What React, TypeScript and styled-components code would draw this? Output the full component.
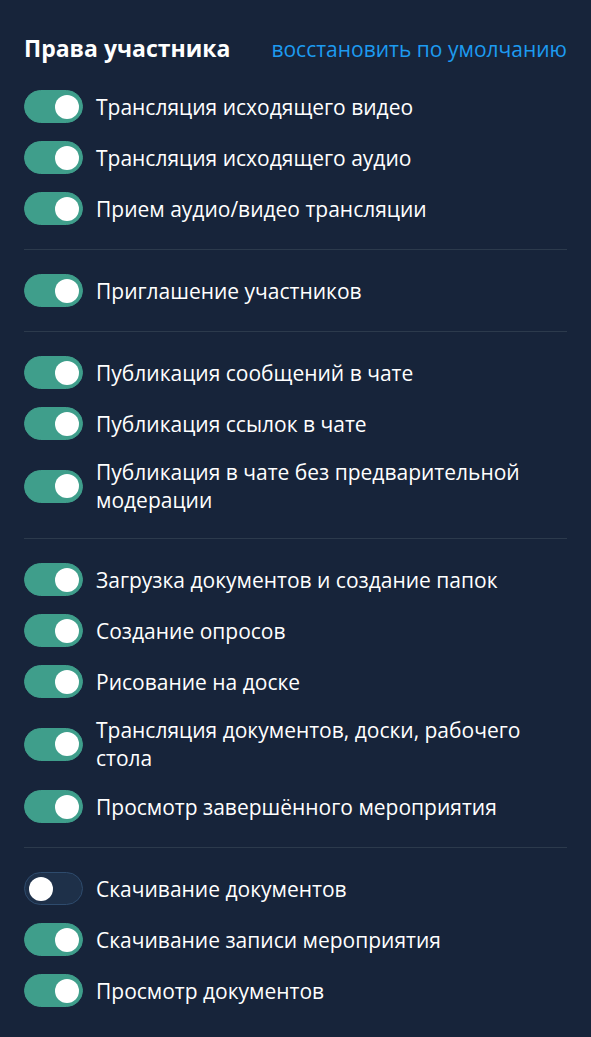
import React, { useState } from "react";
import styled, { createGlobalStyle } from "styled-components";

const GlobalStyle = createGlobalStyle`
  html, body {
    margin: 0;
    padding: 0;
    background-color: #17243a;
  }
  * {
    box-sizing: border-box;
  }
`;

interface Permission {
  id: string;
  label: string;
  on: boolean;
}

const initialSections: Permission[][] = [
  [
    { id: "video", label: "Трансляция исходящего видео", on: true },
    { id: "audio", label: "Трансляция исходящего аудио", on: true },
    { id: "receive", label: "Прием аудио/видео трансляции", on: true },
  ],
  [{ id: "invite", label: "Приглашение участников", on: true }],
  [
    { id: "chat", label: "Публикация сообщений в чате", on: true },
    { id: "links", label: "Публикация ссылок в чате", on: true },
    {
      id: "premod",
      label: "Публикация в чате без предварительной модерации",
      on: true,
    },
  ],
  [
    { id: "upload", label: "Загрузка документов и создание папок", on: true },
    { id: "polls", label: "Создание опросов", on: true },
    { id: "draw", label: "Рисование на доске", on: true },
    {
      id: "share",
      label: "Трансляция документов, доски, рабочего стола",
      on: true,
    },
    { id: "replay", label: "Просмотр завершённого мероприятия", on: true },
  ],
  [
    { id: "download", label: "Скачивание документов", on: false },
    { id: "record", label: "Скачивание записи мероприятия", on: true },
    { id: "view", label: "Просмотр документов", on: true },
  ],
];

function App() {
  const [sections, setSections] = useState(initialSections);

  const toggle = (id: string) => {
    setSections((prev) =>
      prev.map((sec) =>
        sec.map((p) => (p.id === id ? { ...p, on: !p.on } : p))
      )
    );
  };

  return (
    <>
      <GlobalStyle />
      <Panel>
        <Header>
          <Title>Права участника</Title>
          <ResetLink
            onClick={() => {
              setSections(initialSections);
            }}
          >
            восстановить по умолчанию
          </ResetLink>
        </Header>
        {sections.map((sec, i) => (
          <React.Fragment key={i}>
            {i > 0 && <Divider />}
            <Section>
              {sec.map((p) => (
                <Row key={p.id}>
                  <Switch $on={p.on} onClick={() => toggle(p.id)}>
                    <Knob $on={p.on} />
                  </Switch>
                  <Label>{p.label}</Label>
                </Row>
              ))}
            </Section>
          </React.Fragment>
        ))}
      </Panel>
    </>
  );
}

export default App;

// панель
const Panel = styled.div`
  display: flex;
  flex-direction: column;
  width: 591px;
  min-height: 1037px;
  padding: 34px 24px 30px 24px;
  background-color: #17243a;
  font-family: "Open Sans", "Noto Sans", sans-serif;
  color: #ffffff;
`;

// заголовок
const Header = styled.div`
  display: flex;
  justify-content: space-between;
  align-items: baseline;
  margin-bottom: 27px;
`;

const Title = styled.div`
  font-size: 23px;
  font-weight: 700;
  line-height: 28px;
`;

const ResetLink = styled.button`
  border: none;
  background: none;
  padding: 0;
  font-family: inherit;
  font-size: 21px;
  line-height: 28px;
  color: #1d9bf0;
  cursor: pointer;
`;

// списки
const Section = styled.div`
  display: flex;
  flex-direction: column;
  gap: 18px;
`;

const Divider = styled.div`
  height: 1px;
  margin: 24px 0;
  background-color: #2c3a4c;
`;

const Row = styled.div`
  display: flex;
  align-items: center;
  gap: 13px;
  min-height: 33px;
`;

const Label = styled.div`
  font-size: 21px;
  line-height: 28px;
  color: #ffffff;
`;

// переключатель
const Switch = styled.button<{ $on: boolean }>`
  position: relative;
  flex-shrink: 0;
  width: 59px;
  height: 33px;
  padding: 0;
  border-radius: 17px;
  border: 1px solid ${(p) => (p.$on ? "#3f9e8b" : "#2e4b6d")};
  background-color: ${(p) => (p.$on ? "#3f9e8b" : "#1e3049")};
  cursor: pointer;
`;

const Knob = styled.span<{ $on: boolean }>`
  position: absolute;
  top: 50%;
  left: ${(p) => (p.$on ? "30px" : "4px")};
  width: 24px;
  height: 24px;
  margin-top: -12px;
  border-radius: 50%;
  background-color: #ffffff;
`;
